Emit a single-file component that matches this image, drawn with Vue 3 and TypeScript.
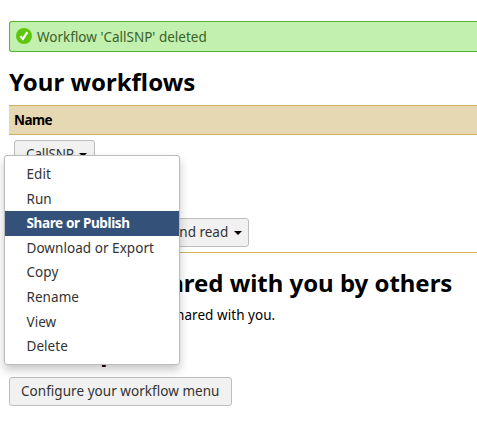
<script setup lang="ts">
import { ref } from 'vue'

const actions: string[] = ['Edit', 'Run', 'Share or Publish', 'Download or Export', 'Copy', 'Rename', 'View', 'Delete']
const active = ref('Share or Publish')
</script>

<template>
  <main class="page">
    <div class="notice">
      <svg class="check" viewBox="0 0 16 16" aria-hidden="true">
        <circle cx="8" cy="8" r="8" fill="#5fc70b" />
        <path d="M4.4 8.2 6.9 10.9 11.3 4.2" fill="none" stroke="#fff" stroke-width="2.2" />
      </svg>
      <span class="notice-text">Workflow 'CallSNP' deleted</span>
    </div>

    <h2 class="title own">Your workflows</h2>
    <section class="table">
      <header class="head"><span>Name</span></header>
      <div class="row first">
        <div class="picker">
          <button class="btn call"><span>CallSNP</span><i class="caret"></i></button>
          <ul class="menu">
            <li v-for="action in actions" :key="action" :class="{ active: action === active }" @mouseenter="active = action">
              <span>{{ action }}</span>
            </li>
          </ul>
        </div>
      </div>
      <div class="row">
        <button class="btn read"><span>Workflow for mapping and read</span><i class="caret"></i></button>
      </div>
    </section>

    <h2 class="title shared">Workflows shared with you by others</h2>
    <p class="empty">No workflows have been shared with you.</p>
    <h2 class="title options">Other options</h2>
    <button class="btn configure"><span>Configure your workflow menu</span></button>
  </main>
</template>

<style>
body { background: #fff; overflow: hidden; }
</style>

<style scoped>
* { box-sizing: border-box; }
.page {
  height: 442px;
  padding: 21px 0 0 9px;
  overflow: hidden;
  color: #000;
  font: 13.5px/20px "Noto Sans", "Open Sans", sans-serif;
}
.notice {
  display: flex;
  align-items: center;
  height: 31px;
  padding-left: 6px;
  gap: 5px;
  border: 1px solid #5caf32;
  border-right: 0;
  border-radius: 3px 0 0 3px;
  background: #c2f0ae;
  color: #3b622b;
}
.check { width: 16px; height: 16px; margin-bottom: 1px; }
.title { margin: 0; font-size: 24px; line-height: 30px; font-weight: 700; white-space: nowrap; }
.own { margin-top: 15px; }
.table { margin-top: 8px; border-bottom: 1px solid #cdb15d; height: 148px; }
.head {
  display: flex;
  align-items: center;
  height: 30px;
  padding-left: 5px;
  border: solid #cdb15d;
  border-width: 1px 0;
  background: #e6d8b3;
  font-weight: 700;
  letter-spacing: -.55px;
}
.row { padding: 5px 0 0 5px; letter-spacing: 0; }
.first { height: 78px; }
.picker { position: relative; width: 81px; }
.btn {
  display: flex;
  align-items: center;
  justify-content: space-between;
  height: 29px;
  padding: 0 7px 1px 11px;
  border: 1px solid #bdbdbd;
  border-radius: 3px;
  background: #f1f1f1;
  color: #333;
  font: inherit;
  white-space: nowrap;
}
.call { width: 81px; }
.call span { letter-spacing: -.15px; }
.read { width: 235px; padding-right: 6px; }
.caret { margin-top: 1px; border: solid transparent; border-width: 4px 4px 0; border-top-color: #000; }
.menu {
  position: absolute;
  z-index: 2;
  top: 15px;
  left: -10px;
  width: 176px;
  height: 210px;
  margin: 0;
  padding: 6px 0;
  border: 1px solid #bcbcbc;
  border-radius: 3px;
  background: #fff;
  box-shadow: 0 5px 10px rgba(0, 0, 0, .22);
  color: #333;
  list-style: none;
}
.menu li { height: 24.6px; padding-left: 21.5px; line-height: 24.6px; letter-spacing: .05px; white-space: nowrap; }
.menu .active { background: #34517a; color: #fff; font-weight: 700; letter-spacing: -.36px; }
.shared { margin-top: 15px; letter-spacing: -.03px; }
.empty { margin: 7px 0 0; letter-spacing: .05px; white-space: nowrap; }
.options { margin-top: 12px; }
.configure { width: 223px; margin-top: 10px; letter-spacing: .04px; }
</style>
